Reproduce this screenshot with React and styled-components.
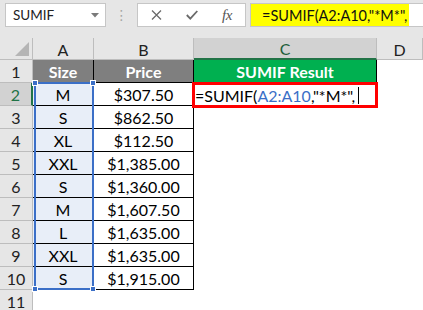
import styled, { createGlobalStyle } from "styled-components"

const GlobalStyle = createGlobalStyle`
    html, body {
        margin: 0;
        padding: 0;
        overflow: hidden;
        background: #ffffff;
    }
    * {
        box-sizing: border-box;
    }
`

const Page = styled.div`
    width: 423px;
    height: 310px;
    overflow: hidden;
    background: #ffffff;
    font-family: Lato, "Liberation Sans", sans-serif;
`

const Toolbar = styled.div`
    display: flex;
    align-items: flex-start;
    height: 38px;
    padding: 3px 0 0 5px;
    background: #e6e6e6;
`

const NameBox = styled.div`
    display: flex;
    align-items: center;
    justify-content: space-between;
    width: 101px;
    height: 24px;
    padding: 0 6px 0 7px;
    background: #ffffff;
    border: 1px solid #c6c6c6;
    font-size: 13.5px;
    color: #222;
`

const Dots = styled.div`
    display: flex;
    align-items: center;
    justify-content: center;
    width: 31px;
    height: 24px;
    color: #a6a6a6;
    font-size: 14px;
    font-family: "DejaVu Sans", sans-serif;
`

const ButtonsBox = styled.div`
    display: flex;
    align-items: center;
    width: 109px;
    height: 24px;
    padding-left: 12px;
    background: #ffffff;
    border: 1px solid #c6c6c6;
`

const IconSlot = styled.div`
    display: flex;
    align-items: center;
    justify-content: center;
    width: ${(p) => p.$w}px;
    height: 22px;
`

const Fx = styled.span`
    font-family: "Liberation Serif", serif;
    font-style: italic;
    font-size: 15px;
    color: #555;
    letter-spacing: -0.5px;
`

const FormulaBox = styled.div`
    flex: 1;
    display: flex;
    height: 24px;
    margin-left: 4px;
    background: #ffffff;
    border: 1px solid #c6c6c6;
    border-right: none;
`

const Highlight = styled.span`
    display: flex;
    align-items: center;
    height: 100%;
    padding: 0 2px 0 11px;
    background: #ffff00;
    font-size: 14.5px;
    color: #111;
    white-space: nowrap;
`

const Sheet = styled.div`
    display: grid;
    grid-template-columns: 33px 61px 100px 183px 1fr;
    grid-template-rows: 22px repeat(11, 23px);
`

const Corner = styled.div`
    background: #e6e6e6;
    border-right: 1px solid #bdbdbd;
    border-bottom: 1px solid #bdbdbd;
    display: flex;
    align-items: flex-end;
    justify-content: flex-end;
    padding: 0 3px 3px 0;
`

const ColHead = styled.div`
    display: flex;
    align-items: center;
    justify-content: center;
    background: ${(p) => (p.$active ? "#d2d2d2" : "#e6e6e6")};
    border-right: 1px solid #bdbdbd;
    border-bottom: ${(p) => (p.$active ? "2px solid #217346" : "1px solid #bdbdbd")};
    font-size: 16px;
    color: ${(p) => (p.$active ? "#1d5e3a" : "#222")};
    padding-top: 1px;
`

const RowHead = styled.div`
    display: flex;
    align-items: center;
    justify-content: center;
    background: ${(p) => (p.$active ? "#d2d2d2" : "#e6e6e6")};
    border-right: ${(p) => (p.$active ? "2px solid #217346" : "1px solid #bdbdbd")};
    border-bottom: 1px solid #bdbdbd;
    font-size: 16px;
    color: ${(p) => (p.$active ? "#217346" : "#222")};
    padding-top: 1px;
`

const Cell = styled.div`
    position: relative;
    display: flex;
    align-items: center;
    justify-content: center;
    padding-top: 1px;
    font-size: 16px;
    white-space: nowrap;
    color: #000;
    background: ${(p) => p.$bg || "transparent"};
    border-right: ${(p) => (p.$boxed ? "1px solid #000" : "none")};
    border-bottom: ${(p) => (p.$boxed ? "1px solid #000" : "none")};
`

const HeadCell = styled(Cell)`
    font-weight: 700;
    color: #ffffff;
`

const EditCell = styled.div`
    position: relative;
    z-index: 3;
    display: flex;
    align-items: center;
    margin: -1px -1px -2px -2px;
    border: 3px solid #ff0000;
    background: #ffffff;
    font-size: 16px;
    white-space: nowrap;
    color: #000;
    padding-top: 1px;
`

const RangeRef = styled.span`
    color: #3b6fc7;
`

const Caret = styled.span`
    display: inline-block;
    width: 1px;
    height: 17px;
    margin-left: 3px;
    background: #000;
`

/* blue outline of the A2:A10 range, laid over the column */
const Selection = styled.div`
    position: absolute;
    z-index: 2;
    top: -1px;
    left: 1px;
    right: -1px;
    height: ${(p) => p.$rows * 23 + 1}px;
    border: 2px solid #3b6fc7;
    pointer-events: none;
`

const Handle = styled.span`
    position: absolute;
    width: 6px;
    height: 6px;
    background: #3b6fc7;
    border: 1px solid #ffffff;
    ${(p) => (p.$top ? "top: -4px;" : "bottom: -4px;")}
    ${(p) => (p.$left ? "left: -4px;" : "right: -4px;")}
`

const rows = [
    ["M", "$307.50"],
    ["S", "$862.50"],
    ["XL", "$112.50"],
    ["XXL", "$1,385.00"],
    ["S", "$1,360.00"],
    ["M", "$1,607.50"],
    ["L", "$1,635.00"],
    ["XXL", "$1,635.00"],
    ["S", "$1,915.00"],
]

function CloseIcon() {
    return (
        <svg width="11" height="10" viewBox="0 0 11 10">
            <path d="M1 0.5 L10 9.5 M10 0.5 L1 9.5" stroke="#6a6a6a" strokeWidth="1.3" fill="none" />
        </svg>
    )
}

function CheckIcon() {
    return (
        <svg width="12" height="10" viewBox="0 0 12 10">
            <path d="M0.8 5 L4.3 8.6 L11.3 1" stroke="#6a6a6a" strokeWidth="1.8" fill="none" />
        </svg>
    )
}

function DropArrow() {
    return (
        <svg width="8" height="5" viewBox="0 0 8 5">
            <path d="M0 0 H8 L4 4.5 Z" fill="#7a7a7a" />
        </svg>
    )
}

function CornerMark() {
    return (
        <svg width="14" height="14" viewBox="0 0 14 14">
            <path d="M14 0 V14 H0 Z" fill="#b5b5b5" />
        </svg>
    )
}

function Row({ n, size, price }) {
    const first = n === 2
    return (
        <>
            <RowHead $active={first}>{n}</RowHead>
            <Cell $boxed $bg="#e8eef8">
                {size}
                {first && (
                    <Selection $rows={rows.length}>
                        <Handle $top $left />
                        <Handle $top />
                        <Handle $left />
                        <Handle />
                    </Selection>
                )}
            </Cell>
            <Cell $boxed>{price}</Cell>
            {first ? (
                <EditCell>
                    =SUMIF(<RangeRef>A2:A10</RangeRef>,"*M*",<Caret />
                </EditCell>
            ) : (
                <Cell />
            )}
            <Cell />
        </>
    )
}

export default function App() {
    return (
        <Page>
            <GlobalStyle />
            <Toolbar>
                <NameBox>
                    <span>SUMIF</span>
                    <DropArrow />
                </NameBox>
                <Dots>⋮</Dots>
                <ButtonsBox>
                    <IconSlot $w={12}><CloseIcon /></IconSlot>
                    <IconSlot $w={24} />
                    <IconSlot $w={12}><CheckIcon /></IconSlot>
                    <IconSlot $w={24} />
                    <Fx>fx</Fx>
                </ButtonsBox>
                <FormulaBox>
                    <Highlight>=SUMIF(A2:A10,"*M*",</Highlight>
                </FormulaBox>
            </Toolbar>

            <Sheet>
                <Corner><CornerMark /></Corner>
                <ColHead>A</ColHead>
                <ColHead>B</ColHead>
                <ColHead $active>C</ColHead>
                <ColHead>D</ColHead>

                <RowHead>1</RowHead>
                <HeadCell $boxed $bg="#7f7f7f">Size</HeadCell>
                <HeadCell $boxed $bg="#7f7f7f">Price</HeadCell>
                <HeadCell $boxed $bg="#00b050">SUMIF Result</HeadCell>
                <Cell />

                {rows.map(([size, price], i) => (
                    <Row key={i} n={i + 2} size={size} price={price} />
                ))}

                <RowHead>11</RowHead>
                <Cell />
                <Cell />
                <Cell />
                <Cell />
            </Sheet>
        </Page>
    )
}
